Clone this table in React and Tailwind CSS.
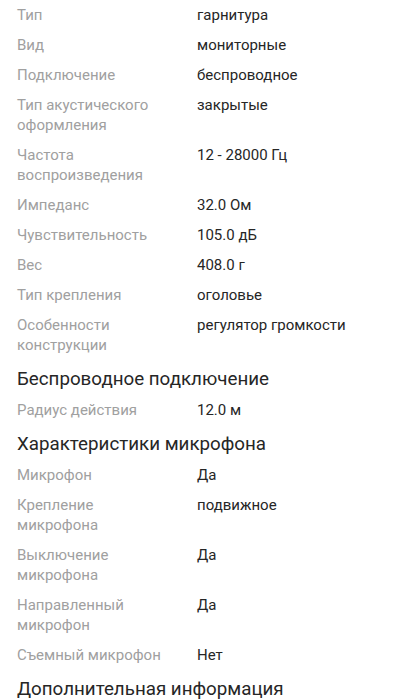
import React from 'react';

const sections = [
  {
    title: null,
    rows: [
      ['Тип', 'гарнитура'],
      ['Вид', 'мониторные'],
      ['Подключение', 'беспроводное'],
      ['Тип акустического оформления', 'закрытые'],
      ['Частота воспроизведения', '12 - 28000 Гц'],
      ['Импеданс', '32.0 Ом'],
      ['Чувствительность', '105.0 дБ'],
      ['Вес', '408.0 г'],
      ['Тип крепления', 'оголовье'],
      ['Особенности конструкции', 'регулятор громкости'],
    ],
  },
  {
    title: 'Беспроводное подключение',
    rows: [['Радиус действия', '12.0 м']],
  },
  {
    title: 'Характеристики микрофона',
    rows: [
      ['Микрофон', 'Да'],
      ['Крепление микрофона', 'подвижное'],
      ['Выключение микрофона', 'Да'],
      ['Направленный микрофон', 'Да'],
      ['Съемный микрофон', 'Нет'],
    ],
  },
  {
    title: 'Дополнительная информация',
    rows: [],
  },
];

const SpecRow = ({ label, value }) => (
  <div className="flex py-[5px] text-[15px] leading-[20px]">
    <div className="w-[180px] shrink-0 pr-[30px] text-[#a0a0a0]">{label}</div>
    <div className="flex-1 text-[#262626]">{value}</div>
  </div>
);

export default function App() {
  return (
    <div
      className="min-h-screen bg-white px-[17px] overflow-hidden"
      style={{ fontFamily: 'Roboto, "Noto Sans", sans-serif' }}
    >
      {sections.map((section, i) => (
        <div key={i}>
          {section.title && (
            <h2 className="h-[35px] pt-[7px] text-[18.75px] leading-[24px] text-[#262626]">
              {section.title}
            </h2>
          )}
          {section.rows.map(([label, value]) => (
            <SpecRow key={label} label={label} value={value} />
          ))}
        </div>
      ))}
    </div>
  );
}
